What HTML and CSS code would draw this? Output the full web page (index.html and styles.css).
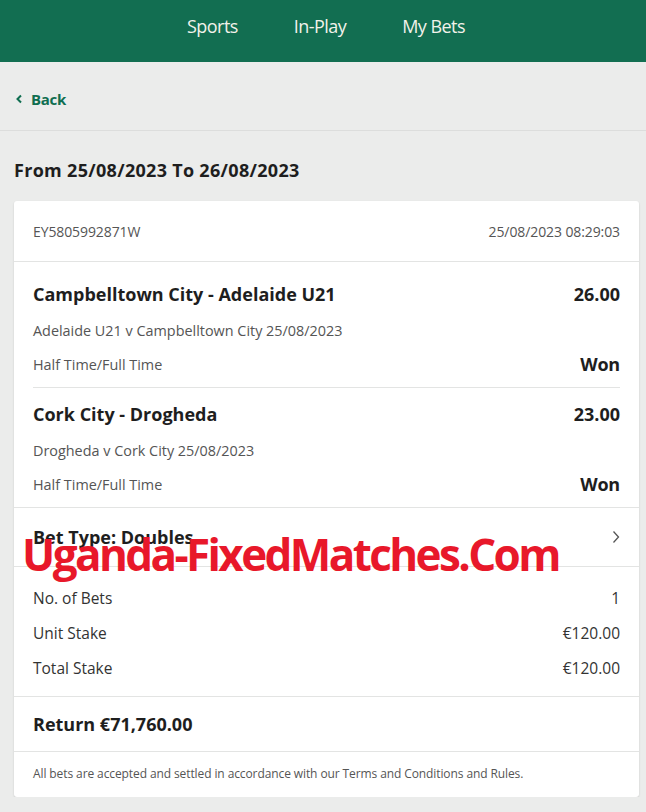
FILE: index.html
```html
<!DOCTYPE html>
<html>

<head>
    <title>My Bets</title>
    <link rel="stylesheet" href="styles.css">
</head>

<body>

    <div class="topbar">
        <a class="nav-link">Sports</a>
        <a class="nav-link">In-Play</a>
        <a class="nav-link">My Bets</a>
    </div>

    <div class="back-row">
        <a class="back">
            <svg width="8" height="10" viewBox="0 0 8 10"><path d="M6 1.5 L2.5 5 L6 8.5" fill="none" stroke="#0f6e50" stroke-width="2"/></svg>
            Back
        </a>
    </div>

    <h2 class="range">From 25/08/2023 To 26/08/2023</h2>

    <div class="card">
        <div class="row head">
            <span>EY5805992871W</span>
            <span>25/08/2023 08:29:03</span>
        </div>

        <div class="selections">
            <div class="selection">
                <div class="line main">
                    <span>Campbelltown City - Adelaide U21</span>
                    <span>26.00</span>
                </div>
                <div class="line sub">Adelaide U21 v Campbelltown City 25/08/2023</div>
                <div class="line sub">
                    <span>Half Time/Full Time</span>
                    <span class="result">Won</span>
                </div>
            </div>
            <div class="selection">
                <div class="line main">
                    <span>Cork City - Drogheda</span>
                    <span>23.00</span>
                </div>
                <div class="line sub">Drogheda v Cork City 25/08/2023</div>
                <div class="line sub">
                    <span>Half Time/Full Time</span>
                    <span class="result">Won</span>
                </div>
            </div>
        </div>

        <div class="row bet-type">
            <span>Bet Type: Doubles</span>
            <svg width="8" height="14" viewBox="0 0 8 14"><path d="M1.5 1.5 L6.5 7 L1.5 12.5" fill="none" stroke="#555" stroke-width="1.3"/></svg>
            <div class="watermark">Uganda-FixedMatches.Com</div>
        </div>

        <div class="stakes">
            <div class="stake"><span>No. of Bets</span><span>1</span></div>
            <div class="stake"><span>Unit Stake</span><span>€120.00</span></div>
            <div class="stake"><span>Total Stake</span><span>€120.00</span></div>
        </div>

        <div class="row return">Return €71,760.00</div>

        <div class="terms">All bets are accepted and settled in accordance with our Terms and Conditions and Rules.</div>
    </div>

</body>

</html>
```

FILE: styles.css
```css
body {
    margin: 0;
    background: #ebeceb;
    font-family: 'Open Sans', 'Noto Sans', sans-serif;
    color: #1e1e1e;
}

.topbar {
    height: 62px;
    background: #126e51;
    display: flex;
    justify-content: center;
    align-items: flex-start;
    gap: 56px;
    padding-left: 6px;
    box-sizing: border-box;
}

.nav-link {
    color: #f2f2ea;
    font-size: 18px;
    letter-spacing: -0.55px;
    line-height: 52px;
}

.back-row {
    height: 69px;
    border-bottom: 1px solid #dcdddc;
    display: flex;
    align-items: center;
    padding-left: 15px;
    padding-top: 5px;
    box-sizing: border-box;
}

.back {
    display: flex;
    align-items: center;
    gap: 8px;
    color: #0f6e50;
    font-weight: 700;
    font-size: 15px;
    letter-spacing: -0.3px;
}

.range {
    margin: 27px 0 19px 14px;
    font-size: 18px;
    font-weight: 700;
    letter-spacing: 0.3px;
    line-height: 24px;
}

.card {
    background: #fff;
    margin: 0 7px 0 14px;
    border-radius: 3px;
    box-shadow: 0 1px 2px rgba(0, 0, 0, 0.15);
}

.row {
    display: flex;
    justify-content: space-between;
    align-items: center;
    padding: 0 19px;
    border-bottom: 1px solid #e3e4e3;
}

.head {
    height: 60px;
    font-size: 14px;
    color: #555;
    letter-spacing: -0.1px;
}

.selections {
    border-bottom: 1px solid #e3e4e3;
}

.selection {
    margin: 0 19px;
    padding: 19px 0 6px;
}

.selection + .selection {
    border-top: 1px solid #e3e4e3;
    padding-top: 13px;
}

.line {
    display: flex;
    justify-content: space-between;
    align-items: center;
}

.main {
    font-size: 18px;
    font-weight: 700;
    height: 26px;
    margin-bottom: 6px;
}

.sub {
    font-size: 14.4px;
    color: #555;
    height: 34px;
}

.result {
    font-size: 18px;
    font-weight: 700;
    color: #1e1e1e;
    letter-spacing: -0.2px;
}

.bet-type {
    position: relative;
    height: 58px;
    font-size: 18px;
    font-weight: 700;
}

.watermark {
    position: absolute;
    left: 8px;
    top: 18px;
    color: #e8182a;
    font-family: 'Open Sans', sans-serif;
    font-weight: 700;
    font-size: 44px;
    letter-spacing: -2.6px;
    line-height: 56px;
    white-space: nowrap;
}

.stakes {
    padding: 13px 19px 11px;
    border-bottom: 1px solid #e3e4e3;
}

.stake {
    display: flex;
    justify-content: space-between;
    align-items: center;
    height: 35px;
    font-size: 15.5px;
    color: #333;
}

.return {
    height: 54px;
    font-size: 18px;
    font-weight: 700;
}

.terms {
    padding: 14px 19px 15px;
    font-size: 12px;
    color: #555;
    letter-spacing: -0.1px;
    line-height: 16px;
}
```
